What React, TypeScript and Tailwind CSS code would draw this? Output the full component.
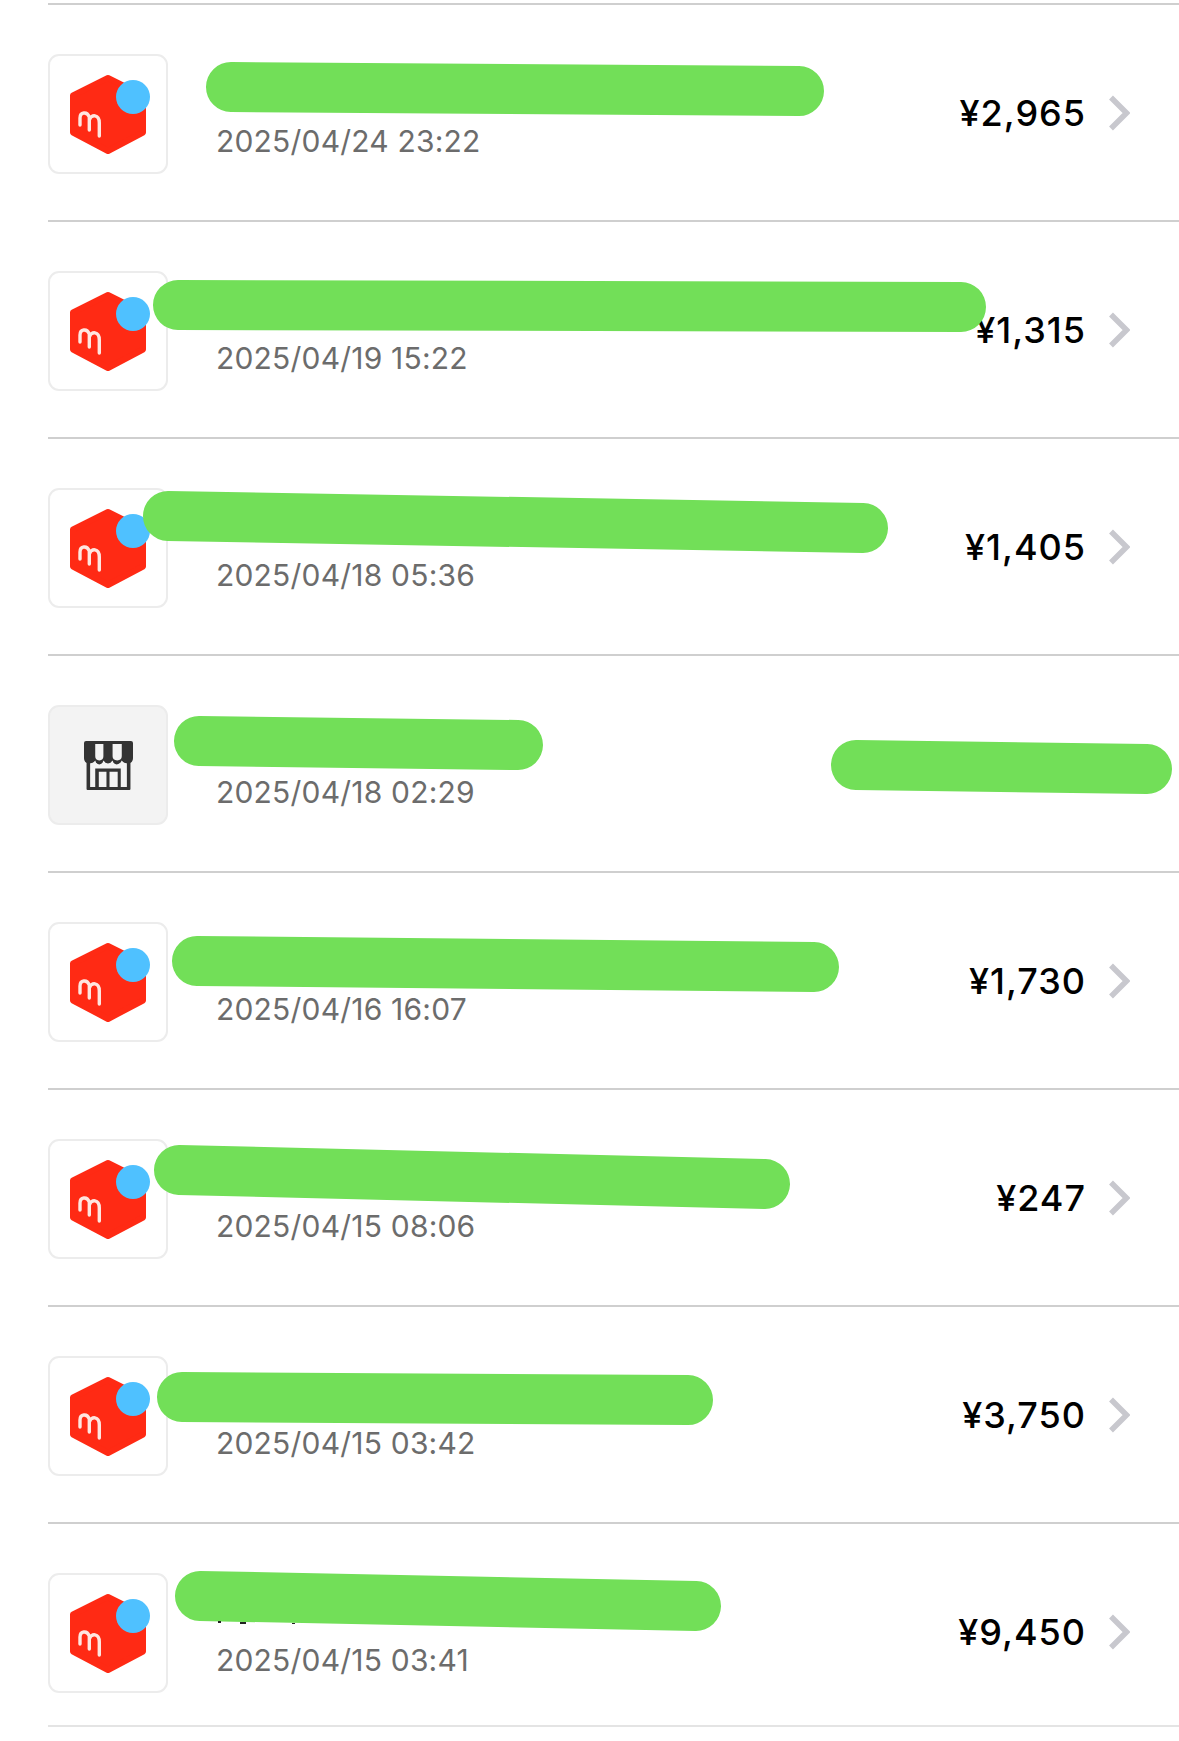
import React from 'react';

const rows = [
  { date: '2025/04/24 23:22', amount: '¥2,965', icon: 'mercari' },
  { date: '2025/04/19 15:22', amount: '¥1,315', icon: 'mercari' },
  { date: '2025/04/18 05:36', amount: '¥1,405', icon: 'mercari' },
  { date: '2025/04/18 02:29', amount: '', icon: 'store' },
  { date: '2025/04/16 16:07', amount: '¥1,730', icon: 'mercari' },
  { date: '2025/04/15 08:06', amount: '¥247', icon: 'mercari' },
  { date: '2025/04/15 03:42', amount: '¥3,750', icon: 'mercari' },
  { date: '2025/04/15 03:41', amount: '¥9,450', icon: 'mercari' },
];

// marker scribbles drawn over the page
const scribbles = [
  [231, 87, 799, 91],
  [178, 305, 961, 307],
  [168, 516, 863, 528],
  [199, 741, 518, 745],
  [856, 765, 1147, 769],
  [197, 961, 814, 967],
  [179, 1170, 765, 1184],
  [182, 1397, 688, 1400],
  [200, 1596, 696, 1606],
];

const MercariIcon = () => (
  <div className="w-[120px] h-[120px] shrink-0 rounded-[11px] border-2 border-[#ececec] bg-white">
    <svg width="116" height="116" viewBox="2 2 116 116">
      <path d="M60 24 L95 41.5 V78.5 L60 97 L25 78.5 V41.5 Z" fill="#ff2a14" stroke="#ff2a14" strokeWidth="6" strokeLinejoin="round" />
      <path d="M32 71 V64 C32 58 39 57 41.3 63 V76 M41.3 66 C43 60 51.3 60 51.3 69 V82" fill="none" stroke="#ffe6e0" strokeWidth="3.4" strokeLinecap="round" />
      <circle cx="85" cy="43" r="17" fill="#4fc1ff" />
    </svg>
  </div>
);

const StoreIcon = () => (
  <div className="w-[120px] h-[120px] shrink-0 rounded-[11px] border-2 border-[#ececec] bg-[#f3f3f3] flex items-center justify-center">
    <svg width="49" height="49" viewBox="0 0 48 48" fill="#333333">
      <path d="M2 0 H46 Q48 0 48 2 V17 Q48 22 43 22 Q39 22 37 19 Q35 23 32 23 Q29 23 28 19 Q26 22 23.5 22 Q21 22 19 19 Q18 23 15 23 Q12 23 11 19 Q9 22 5 22 Q0 22 0 17 V2 Q0 0 2 0 Z" />
      <path d="M11 3 H19 V15 Q19 19 15 19 Q11 19 11 15 Z M28 3 H37 V15 Q37 19 32.5 19 Q28 19 28 15 Z" fill="#f3f3f3" />
      <path d="M2.5 20 H6 V45 H11 V27 H36 V45 H42 V20 H45.5 V47 Q45.5 48 44.5 48 H3.5 Q2.5 48 2.5 47 Z" />
      <path d="M14.5 30 H22 V45 H14.5 Z M25 30 H33 V45 H25 Z" fill="#f3f3f3" />
    </svg>
  </div>
);

const Chevron = () => (
  <svg width="22" height="36" viewBox="0 0 22 36" className="shrink-0">
    <path d="M3 2.5 L18.5 18 L3 33.5" fill="none" stroke="#c8c8ce" strokeWidth="5.5" />
  </svg>
);

const App: React.FC = () => {
  return (
    <div className="relative w-[1179px] h-[1741px] overflow-hidden bg-white font-['Inter',sans-serif] pt-[3px]">
      <div className="ml-12 border-t-2 border-[#cfcfcf]">
        {rows.map((row, index) => (
          <div
            key={index}
            className={
              index === rows.length - 1
                ? 'h-[203px] pt-[49px] flex items-start border-b-2 border-[#e4e4e4]'
                : 'h-[217px] pt-[49px] flex items-start border-b-2 border-[#cfcfcf]'
            }
          >
            {row.icon === 'store' ? <StoreIcon /> : <MercariIcon />}
            <div className="ml-[48px] pt-[69px] text-[30px] leading-[36px] tracking-[0.2px] text-[#6c6c6c]">{row.date}</div>
            <div className="ml-auto mr-[49px] h-[118px] flex items-center gap-[22px]">
              <span className="text-[36px] font-medium tracking-[1px] text-black">{row.amount}</span>
              <Chevron />
            </div>
          </div>
        ))}
      </div>
      <svg className="absolute left-0 top-0" width="1179" height="1741">
        {scribbles.map(([x1, y1, x2, y2], index) => (
          <line key={index} x1={x1} y1={y1} x2={x2} y2={y2} stroke="#72df58" strokeWidth="50" strokeLinecap="round" />
        ))}
        <rect x="218" y="1621" width="3" height="2" fill="#222222" />
        <rect x="240" y="1622" width="6" height="2" fill="#222222" />
        <rect x="292" y="1623" width="3" height="1" fill="#222222" />
      </svg>
    </div>
  );
};

export default App;
